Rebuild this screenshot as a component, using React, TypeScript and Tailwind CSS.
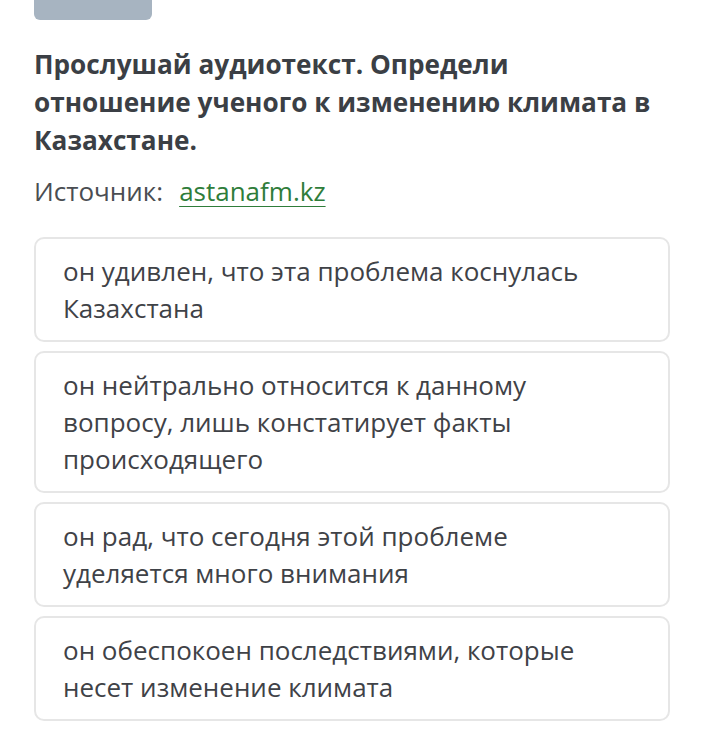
import React from 'react';

const options = [
  ['он удивлен, что эта проблема коснулась', 'Казахстана'],
  ['он нейтрально относится к данному', 'вопросу, лишь констатирует факты', 'происходящего'],
  ['он рад, что сегодня этой проблеме', 'уделяется много внимания'],
  ['он обеспокоен последствиями, которые', 'несет изменение климата'],
];

export default function App() {
  return (
    <div className="min-h-[751px] w-[704px] bg-white px-[34px] font-['Open_Sans',sans-serif] text-[#3b3f45]">
      {/* Кнопка сверху (обрезана) */}
      <div className="-mt-[20px] h-[40px] w-[118px] rounded-[6px] bg-[#a7b4c1]" />

      <h2 className="mt-[25px] text-[26.2px] font-bold leading-[38px]">
        Прослушай аудиотекст. Определи
        <br />
        отношение ученого к изменению климата в
        <br />
        Казахстане.
      </h2>

      <p className="mt-[14px] text-[26px] leading-[36px] text-[#4a4d52]">
        Источник:
        <a href="#" className="ml-[16px] text-[#2f7d3a] underline decoration-1 underline-offset-[5px]">
          astanafm.kz
        </a>
      </p>

      <div className="mt-[28px] flex flex-col gap-[9px]">
        {options.map((lines) => (
          <div
            key={lines[0]}
            className="rounded-[10px] border-2 border-[#e6e6e6] py-[13.5px] pl-[27px] pr-[20px] text-[26px] leading-[37px] text-[#3f4247]"
          >
            {lines.map((l, i) => (
              <div key={i}>{l}</div>
            ))}
          </div>
        ))}
      </div>
    </div>
  );
}
